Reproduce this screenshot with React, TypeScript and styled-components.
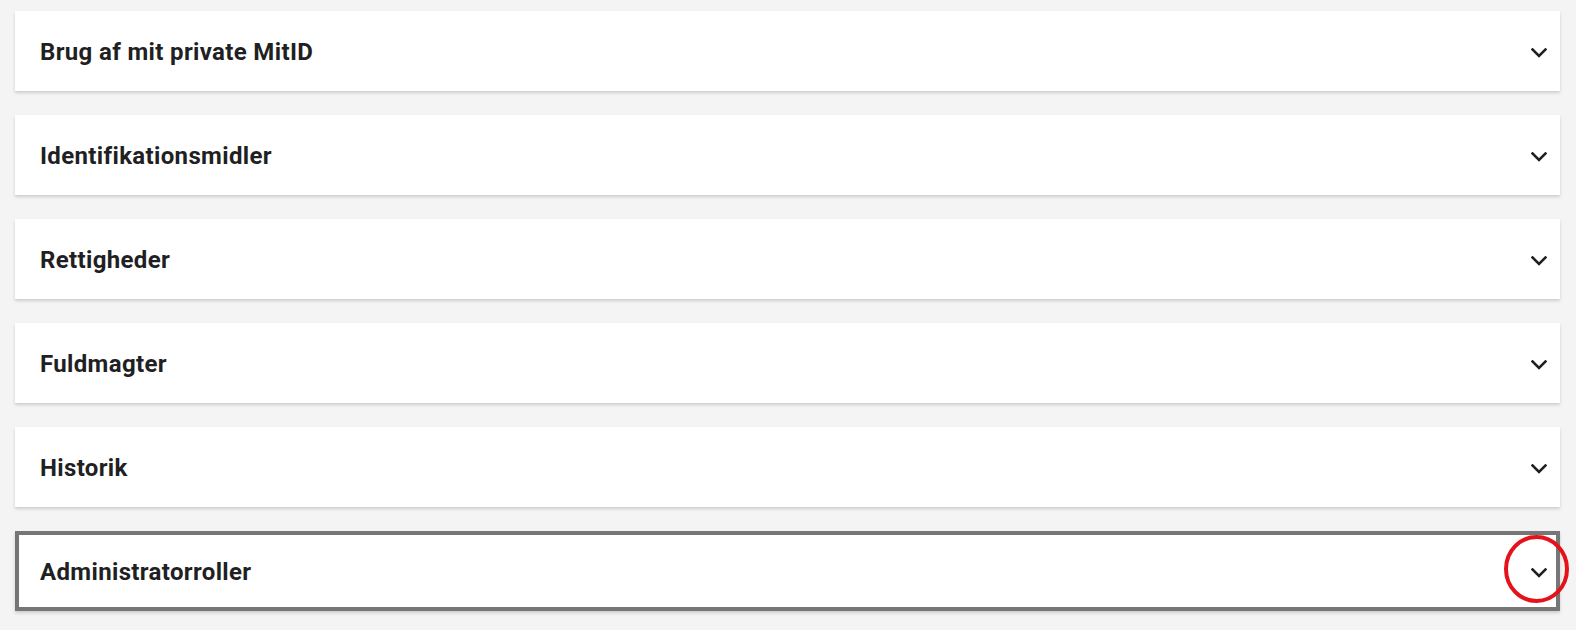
import React from "react";
import styled, { createGlobalStyle } from "styled-components";

const GlobalStyle = createGlobalStyle`
  html, body {
    margin: 0;
    padding: 0;
    background: #f4f4f4;
  }
  body {
    font-family: Roboto, "Noto Sans", "Liberation Sans", sans-serif;
    color: #1f1f24;
  }
  * { box-sizing: border-box; }
`;

const Page = styled.main`
  display: flex;
  flex-direction: column;
  gap: 24px;
  padding: 11px 16px 20px 15px;
`;

const Card = styled.section<{ $focused?: boolean }>`
  position: relative;
  height: 80px;
  background: #ffffff;
  box-shadow: 0 2px 3px rgba(0, 0, 0, 0.16);
  outline: ${(p) => (p.$focused ? "4px solid #767676" : "none")};
  outline-offset: -4px;
`;

const Header = styled.button`
  width: 100%;
  height: 100%;
  display: flex;
  align-items: center;
  justify-content: space-between;
  padding: 1px 13px 0 25px;
  border: none;
  background: transparent;
  cursor: pointer;
  font: inherit;
  color: inherit;
  text-align: left;
`;

const Title = styled.span`
  font-family: Roboto, "Noto Sans", sans-serif;
  font-size: 24px;
  font-weight: 700;
  letter-spacing: 0.35px;
  color: #1f1f24;
`;

const Chevron = styled.svg`
  width: 16px;
  height: 10px;
  margin-top: 3px;
  flex: none;
`;

const Annotation = styled.svg`
  position: absolute;
  right: -10px;
  top: 2px;
  width: 70px;
  height: 74px;
  pointer-events: none;
  overflow: visible;
`;

const items = [
  "Brug af mit private MitID",
  "Identifikationsmidler",
  "Rettigheder",
  "Fuldmagter",
  "Historik",
  "Administratorroller",
];

export default function App() {
  return (
    <>
      <GlobalStyle />
      <Page>
        {items.map((label, i) => {
          const focused = i === items.length - 1;
          return (
            <Card key={label} $focused={focused}>
              <Header type="button" aria-expanded={false}>
                <Title>{label}</Title>
                <Chevron viewBox="0 0 16 10" aria-hidden="true">
                  <polyline
                    points="1.5,1.5 8,8 14.5,1.5"
                    fill="none"
                    stroke="#1f1f24"
                    strokeWidth="2.6"
                    strokeLinecap="square"
                  />
                </Chevron>
              </Header>
              {focused && (
                <Annotation viewBox="0 0 70 74" aria-hidden="true">
                  <ellipse
                    cx="36.5"
                    cy="36"
                    rx="30.5"
                    ry="32"
                    fill="none"
                    stroke="#e5121c"
                    strokeWidth="4"
                  />
                </Annotation>
              )}
            </Card>
          );
        })}
      </Page>
    </>
  );
}
